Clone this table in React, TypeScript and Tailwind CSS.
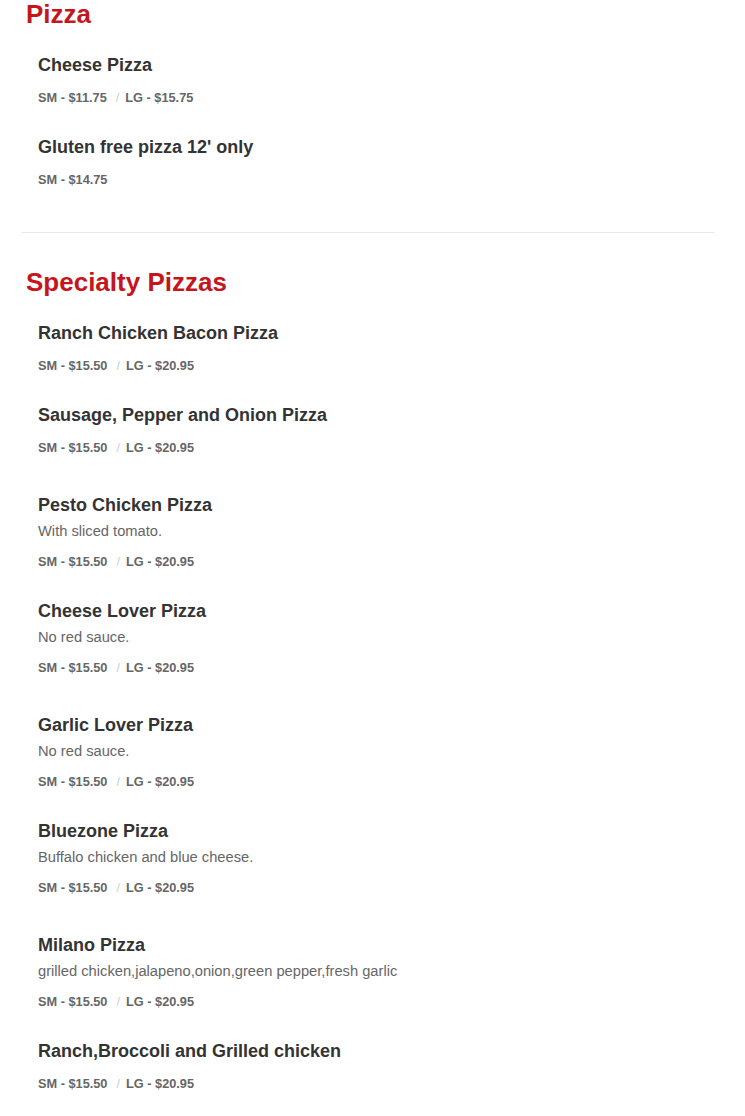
type Item = {
  name: string
  desc?: string
  prices: string[]
}

const pizzas: Item[][] = [
  [
    { name: 'Cheese Pizza', prices: ['SM - $11.75', 'LG - $15.75'] },
    { name: "Gluten free pizza 12' only", prices: ['SM - $14.75'] },
  ],
]

const specialty: Item[][] = [
  [
    { name: 'Ranch Chicken Bacon Pizza', prices: ['SM - $15.50', 'LG - $20.95'] },
    { name: 'Sausage, Pepper and Onion Pizza', prices: ['SM - $15.50', 'LG - $20.95'] },
  ],
  [
    { name: 'Pesto Chicken Pizza', desc: 'With sliced tomato.', prices: ['SM - $15.50', 'LG - $20.95'] },
    { name: 'Cheese Lover Pizza', desc: 'No red sauce.', prices: ['SM - $15.50', 'LG - $20.95'] },
  ],
  [
    { name: 'Garlic Lover Pizza', desc: 'No red sauce.', prices: ['SM - $15.50', 'LG - $20.95'] },
    { name: 'Bluezone Pizza', desc: 'Buffalo chicken and blue cheese.', prices: ['SM - $15.50', 'LG - $20.95'] },
  ],
  [
    {
      name: 'Milano Pizza',
      desc: 'grilled chicken,jalapeno,onion,green pepper,fresh garlic',
      prices: ['SM - $15.50', 'LG - $20.95'],
    },
    { name: 'Ranch,Broccoli and Grilled chicken', prices: ['SM - $15.50', 'LG - $20.95'] },
  ],
]

const MenuItem = ({ item }: { item: Item }) => (
  <div className="pl-[16px]">
    <h3 className="text-[18px] leading-[22px] font-bold text-[#333333]">{item.name}</h3>
    {item.desc && (
      <p className="mt-[5px] text-[14.7px] leading-[20px] text-[#666666]">{item.desc}</p>
    )}
    <div className={`${item.desc ? 'mt-[13px]' : 'mt-[14px]'} flex text-[12.75px] leading-[16px] font-bold text-[#666666]`}>
      {item.prices.map((p, i) => (
        <span key={p} className="flex">
          {i > 0 && <span className="ml-[9px] mr-[6px] font-normal text-[#d0d0d0]">/</span>}
          <span>{p}</span>
        </span>
      ))}
    </div>
  </div>
)

const Section = ({ title, rows }: { title: string; rows: Item[][] }) => (
  <section>
    <h2 className="pl-[4px] text-[26px] leading-[28px] font-bold text-[#c4161c]">{title}</h2>
    <div className="mt-[26px] flex flex-col gap-[38px]">
      {rows.map((row, i) => (
        <div key={i} className="flex flex-col gap-[30px]">
          {row.map((item) => (
            <MenuItem key={item.name} item={item} />
          ))}
        </div>
      ))}
    </div>
  </section>
)

export default function App() {
  return (
    <div className="min-h-[1116px] bg-white font-['Liberation_Sans',Arial,sans-serif]">
      <div className="ml-[22px] w-[692px]">
        <Section title="Pizza" rows={pizzas} />
        <div className="mt-[44px] mb-[35px] h-px bg-[#e6e6e6]" />
        <Section title="Specialty Pizzas" rows={specialty} />
      </div>
    </div>
  )
}
